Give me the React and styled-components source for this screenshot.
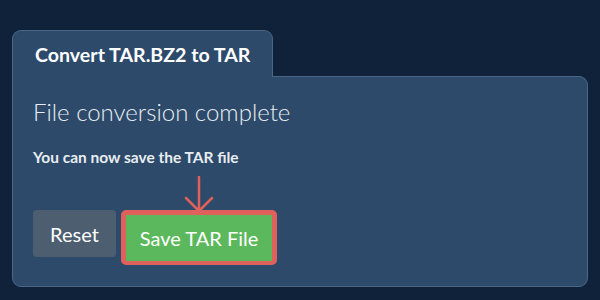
import styled, { createGlobalStyle } from "styled-components";

const GlobalStyle = createGlobalStyle`
  html, body {
    margin: 0;
    padding: 0;
    background: #10223a;
    font-family: Lato, "Open Sans", sans-serif;
  }
`;

export default function App() {
  return (
    <>
      <GlobalStyle />
      <Page>
        <Tab>Convert TAR.BZ2 to TAR</Tab>
        <Panel>
          <Heading>File conversion complete</Heading>
          <Note>You can now save the TAR file</Note>
          <Actions>
            <Button variant="muted">Reset</Button>
            <Highlight>
              <Arrow width="30" height="38" viewBox="0 0 30 38">
                <path
                  d="M15 1 V35 M2 22 L15 35 L28 22"
                  fill="none"
                  stroke="#e0605c"
                  strokeWidth="2.5"
                  strokeLinecap="round"
                  strokeLinejoin="round"
                />
              </Arrow>
              <Button variant="success">Save TAR File</Button>
            </Highlight>
          </Actions>
        </Panel>
      </Page>
    </>
  );
}

const Page = styled.div`
  padding: 30px 12px 13px 12px;
  display: flex;
  flex-direction: column;
  align-items: flex-start;
`;

const Tab = styled.div`
  position: relative;
  z-index: 1;
  box-sizing: border-box;
  width: 261px;
  height: 47px;
  margin-bottom: -1px;
  padding: 12px 0 0 22px;
  background: #2d4a6a;
  border: 1px solid #4b6788;
  border-bottom: none;
  border-radius: 9px 9px 0 0;
  color: #ffffff;
  font-size: 19.6px;
  font-weight: 700;
`;

const Panel = styled.div`
  box-sizing: border-box;
  width: 576px;
  height: 211px;
  padding: 18px 20px 0 20px;
  background: #2d4a6a;
  border: 1px solid #4b6788;
  border-radius: 0 9px 9px 9px;
  display: flex;
  flex-direction: column;
`;

const Heading = styled.h2`
  margin: 0;
  color: #e8edf3;
  font-size: 24px;
  font-weight: 300;
  line-height: 34px;
`;

const Note = styled.p`
  margin: 17px 0 0 0;
  color: #e8edf2;
  font-size: 15.5px;
  font-weight: 700;
  line-height: 22px;
`;

const Actions = styled.div`
  margin-top: 42px;
  display: flex;
  align-items: flex-start;
  gap: 5px;
`;

const Highlight = styled.div`
  position: relative;
  border: 5px solid #e0605c;
  border-bottom-width: 4px;
  border-radius: 5px;
  display: flex;
`;

const Arrow = styled.svg`
  position: absolute;
  left: 50%;
  bottom: 100%;
  margin-bottom: 1px;
  transform: translateX(-50%);
`;

const Button = styled.button`
  box-sizing: border-box;
  border: none;
  font-family: Lato, "Open Sans", sans-serif;
  font-size: 20px;
  font-weight: 400;
  color: #ffffff;
  cursor: pointer;
  background: ${({ variant }) => (variant === "success" ? "#5cb85c" : "#4d5e70")};
  border-radius: ${({ variant }) => (variant === "success" ? "0" : "4px")};
  height: ${({ variant }) => (variant === "success" ? "46px" : "47px")};
  width: ${({ variant }) => (variant === "success" ? "146px" : "83px")};
  padding: 0;
`;
